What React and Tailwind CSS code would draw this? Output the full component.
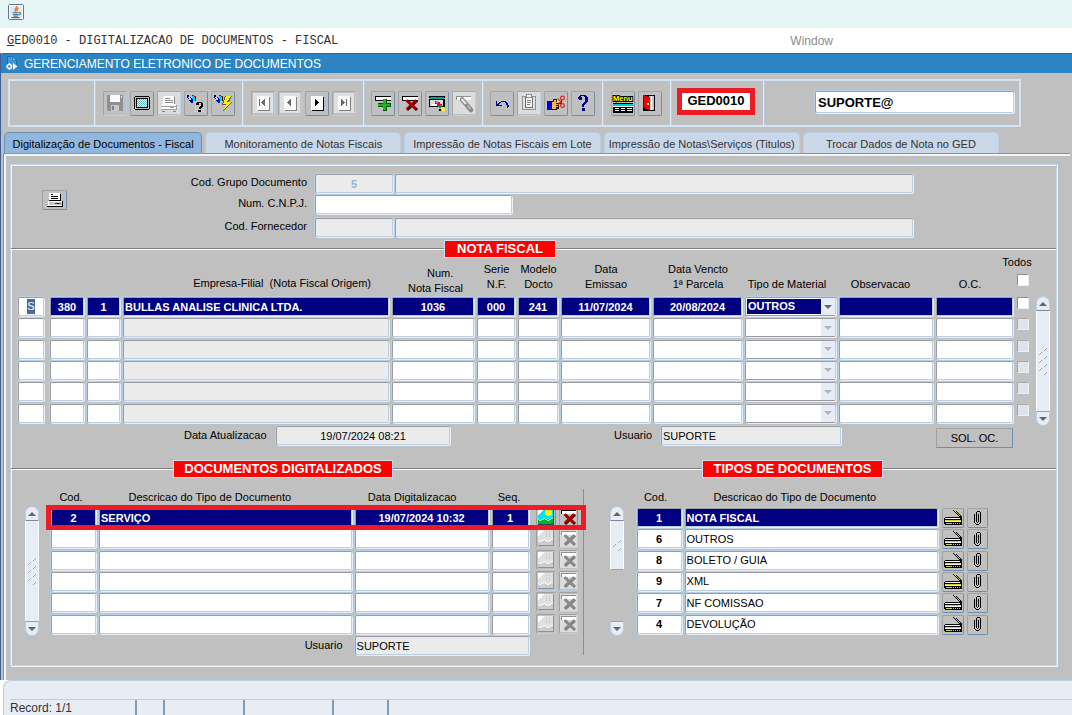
import React from 'react';

/* ---------- icons ---------- */

function Icon({ w = 20, h = 20, children }) {
  return (
    <svg width={w} height={h} viewBox={`0 0 ${w} ${h}`} shapeRendering="crispEdges" aria-hidden="true" className="block shrink-0">
      {children}
    </svg>
  );
}

const JavaIcon = () => (
  <svg width="16" height="16" viewBox="0 0 16 16" aria-hidden="true">
    <rect x="0.5" y="0.5" width="15" height="15" rx="1.5" fill="#e4e8ec" stroke="#5c7896" />
    <rect x="1.5" y="1.5" width="13" height="13" fill="none" stroke="#ffffff" />
    <path d="M8.800 2c.800 1.800-3 2.800-1.600 4.400.400.600.800.900.600 1.800M10.500 4c-1.800.800-2.400 1.800-1 3" fill="none" stroke="#e8762d" strokeWidth="1.400" />
    <path d="M4.500 8.800h6.300M5 10.600h5.200M5.600 12.200h4M3.400 13.600h8.400M11 8.800c2-.600 2.600 1.200-.400 2.400" fill="none" stroke="#44719b" strokeWidth="1.100" />
  </svg>
);

const FormIcon = () => (
  <svg width="12" height="15" viewBox="0 0 12 15" aria-hidden="true">
    <path d="M1.500 8V.500h5L10.500 4.500v4" fill="#3d9ad8" stroke="#1c6ca8" />
    <path d="M6.500.500V4.500h4z" fill="#6cbcf0" stroke="#1c6ca8" strokeWidth=".600" />
    <circle cx="3.400" cy="10.500" r="2" fill="none" stroke="#fff" strokeWidth="1.500" />
    <path d="M3.400 7v1.500M3.400 12.500v1.500M0 10.500h1.500" stroke="#fff" strokeWidth="1.400" />
    <path d="M6.800 7 11.500 10.500 6.800 14z" fill="#fff" />
  </svg>
);

const SaveIcon = () => (
  <Icon>
    <path d="M2 2h16v16H3l-1-1z" fill="#909090" />
    <path d="M5 2h10v7H5z" fill="#fafafa" />
    <path d="M16 3h1v2h-1z" fill="#dedede" />
    <path d="M6 12h8v6H6z" fill="#c8c8c8" />
    <path d="M7 13h2v4H7z" fill="#808080" />
  </Icon>
);

const ScreenIcon = () => (
  <Icon>
    <path d="M3 3h14v1h1v12h-1v1H3v-1H2V4h1z" fill="#000" />
    <path d="M3 4h14v12H3z" fill="#c0c0c0" />
    <path d="M4 5h12v10H4z" fill="#000" />
    <path d="M5 6h10v8H5z" fill="#fff" />
    <path d="M5 6.500h10M5 8.500h10M5 10.500h10M5 12.500h10" stroke="#20c8d0" strokeDasharray="1 1" />
    <path d="M6 7.500h9M6 9.500h9M6 11.500h9M6 13.500h9" stroke="#70c8d0" strokeDasharray="1 1" />
  </Icon>
);

const PrintDisabledIcon = () => (
  <Icon w={22} h={22}>
    <path d="M0 0h22v22H0z" fill="#dcdcdc" />
    <path d="M6 4h9v1h1v7H5V5h1z" fill="#fdfdfd" />
    <path d="M7 6.500h5M7 8.500h8M7 10.500h8M16.500 5v7" stroke="#888" />
    <path d="M4 12h14l1 2v3H3v-3z" fill="#fafafa" />
    <path d="M3 14.500h15M3 17.500h16M18.500 13v5M12 15.500h4" stroke="#a0a0a0" />
    <path d="M4 19.500h3M15 19.500h3" stroke="#808080" />
  </Icon>
);

const Torch = () => (
  <>
    <path d="M1 3h2v1h2v1h2v5H5V9H4V8H3V6H2V5H1z" fill="#0000a8" />
    <path d="M2 4h2v1h1v2H3V5H2z" fill="#b8d8e8" />
    <path d="M6 3h3v1h1v3H9v1H7V6H6z" fill="#00d8e8" />
    <path d="M6 2h2v1h2v1H8V3H6z" fill="#d00000" />
    <path d="M1 2h2v1H1zM9 4h1v4H9z" fill="#000" />
  </>
);

const QueryHelpIcon = () => (
  <Icon>
    <Torch />
    <path d="M9 10.500h10M9 12.500h10M9 14.500h10M9 16.500h10M9 18.500h10" stroke="#f4f060" strokeDasharray="1 1" />
    <path d="M11 9h5v1h1v4h-1v1h-1v1h-2v-2h1v-1h1v-3h-2v2h-3v-2h1zM12 17h3v2h-3z" fill="#000" />
  </Icon>
);

const QueryRunIcon = () => (
  <Icon>
    <Torch />
    <path d="M12 3h7l-3 6h3l-9 10 2-7H9z" fill="#555" />
    <path d="M13 3h5l-4 6h4l-8 9 3-7h-3z" fill="#f8f000" />
  </Icon>
);

function NavIcon({ dim, children }) {
  return (
    <Icon>
      <path d="M0 0h20v20H0z" fill={dim ? '#e0e0e0' : '#c0c0c0'} />
      <path d="M5 4h12v14H5z" fill={dim ? '#808080' : '#000'} />
      <path d="M4 3h12v14H4z" fill={dim ? '#fafafa' : '#fff'} />
      <g fill={dim ? '#6c6c6c' : '#000'}>{children}</g>
    </Icon>
  );
}
const FirstIcon = () => <NavIcon dim><path d="M6 6h1v7H6zM12 6v7h-1v-1h-1v-1H9v-1H8V9h1V8h1V7h1V6z" /></NavIcon>;
const PrevIcon = () => <NavIcon dim><path d="M11 6v7h-1v-1H9v-1H8v-1H7V9h1V8h1V7h1V6z" /></NavIcon>;
const NextIcon = () => <NavIcon><path d="M8 6v7h1v-1h1v-1h1v-1h1V9h-1V8h-1V7H9V6z" /></NavIcon>;
const LastIcon = () => <NavIcon dim><path d="M7 6v7h1v-1h1v-1h1v-1h1V9h-1V8H9V7H8V6zM12 6h1v7h-1z" /></NavIcon>;

const RecordBar = () => (
  <>
    <path d="M2 3h16v5H2z" fill="#000" />
    <path d="M3 4h15v3H3z" fill="#fff" />
  </>
);
const InsertIcon = () => (
  <Icon>
    <RecordBar />
    <path d="M10 6h4v4h4v4h-4v4h-4v-4H5v-4h5z" fill="#005000" />
    <path d="M10 6h3v5h4v2h-4v4h-3v-4H5v-2h5z" fill="#18b818" />
  </Icon>
);
const DeleteMark = ({ dark = '#400000', main = '#b00000' }) => (
  <g shapeRendering="auto" strokeWidth="3" fill="none">
    <path d="M7 7.500 17 17M17 7.500 7 17" stroke={dark} />
    <path d="M6.500 7 16 16M16 7 6.500 16" stroke={main} strokeWidth="2" />
  </g>
);
const DeleteIcon = () => (
  <Icon>
    <RecordBar />
    <DeleteMark />
  </Icon>
);
const EditFormIcon = () => (
  <Icon>
    <path d="M2 3h16v2H2zM2 6h16v8H2z" fill="#000" />
    <path d="M3 4h14v2H3z" fill="#00a0a0" />
    <path d="M3 7h13v6H3z" fill="#dcdcdc" />
    <path d="M3 13h2v-2h3V8h3v5z" fill="#fff" />
    <path d="M8 8h3v1h2v2h2v3h-3v-1h-2v-2H8z" fill="#d01030" />
    <path d="M9 8h2v2H9z" fill="#f070c0" />
    <path d="M11 12h4v3h-3z" fill="#109030" />
    <path d="M14 14h3v1h1v3h-3v-1h-1z" fill="#f8f040" />
    <path d="M16 12h1v2h-1zM12 16h2v2h-2z" fill="#000" />
  </Icon>
);
const BrushIcon = () => (
  <Icon w={22} h={22}>
    <path d="M0 0h22v22H0z" fill="#dcdcdc" />
    <g transform="translate(1 1)">
      <path d="M2 3h15v4H2z" fill="#909090" />
      <path d="M3 4h14v3H3z" fill="#fafafa" />
      <g shapeRendering="auto">
        <path d="M8 6.500 17 17" stroke="#888" strokeWidth="4.500" strokeLinecap="round" />
        <path d="M7.500 6 12 11" stroke="#e8e8e8" strokeWidth="2" />
        <path d="M13.500 12.500 16.500 16" stroke="#c4c4c4" strokeWidth="1.500" />
      </g>
    </g>
  </Icon>
);
const UndoIcon = () => (
  <Icon>
    <path d="M4 8h1v3h1v-1h1V9h2V8h5v1h1v1h1v2h1v2h-1v1h-1v-3h-1v-2h-1V9H9v1H8v1H7v1h3v1H4z" fill="#000088" />
  </Icon>
);
const ClipboardIcon = () => (
  <Icon w={22} h={22}>
    <path d="M0 0h22v22H0z" fill="#dcdcdc" />
    <path d="M4 4h14v14H4z" fill="#909090" />
    <path d="M5 5h12v12H5z" fill="#e4e4e4" />
    <path d="M7.500 5.500h7v10h-7z" fill="#fafafa" stroke="#707070" />
    <path d="M8.500 2.500h5v3h-5z" fill="#f4f4f4" stroke="#909090" />
    <path d="M9 8.500h4M9 10.500h4M9 12.500h3" stroke="#808080" />
  </Icon>
);
const HandCutIcon = () => (
  <Icon>
    <path d="M1 8h4v9H1z" fill="#0000e0" />
    <path d="M5 8h2V6h4v2h5v3h-3v5h-2v1H5z" fill="#201800" />
    <path d="M6 9h2V7h2v2h5v1h-5v1h3v1h-3v1h2v1h-2v2H6z" fill="#f0b840" />
    <path d="M11 8h3v1h-3z" fill="#fff0a0" />
    <g shapeRendering="auto" fill="none" stroke="#e02828" strokeWidth="1.200">
      <circle cx="16.500" cy="5" r="1.900" />
      <circle cx="16.500" cy="12.500" r="1.900" />
      <path d="M12 5.500 16 11M12 12 16 6.500" />
    </g>
  </Icon>
);
const HelpIcon = () => (
  <Icon>
    <path d="M7 2h6v1h1v1h1v5h-1v1h-1v1h-1v1h-1v2h-2v-3h1v-1h1V9h1V4h-1V3H8v1h1v3H6V6H5V4h1V3h1zM9 15h3v3H9z" fill="#000088" />
  </Icon>
);
const MenuIcon = () => (
  <Icon w={22} h={20}>
    <text x="1" y="8" fontFamily="Liberation Sans" fontWeight="bold" fontSize="7.500" fill="#ffff00" stroke="#000" strokeWidth="2" paintOrder="stroke">Menu</text>
    <path d="M1 10h20v3H1z" fill="#00c8d0" />
    <path d="M1 10h20v1H1zM1 13h20v7H1z" fill="#000" />
    <path d="M1 13h20v1H1zM3 15h4v1H3zM9 15h4v1H9zM15 15h5v1h-5zM3 17h4v1H3zM9 17h4v1H9zM15 17h5v1h-5z" fill="#fff" />
  </Icon>
);
const ExitIcon = () => (
  <Icon>
    <path d="M3 2h12v16H3z" fill="#000" />
    <path d="M9 3h5v14H9z" fill="#c8c8c8" />
    <path d="M11 3h1v14h-1z" fill="#fff" />
    <path d="M3 2h2v1h2v1h3v13H8v-1H5v-1H3z" fill="#f00000" />
    <path d="M3 2h1v13H3z" fill="#800000" />
    <path d="M7 10h2v2H7z" fill="#f8f8a0" />
  </Icon>
);

const PrinterIcon = () => (
  <Icon w={18} h={16}>
    <path d="M3 1h11v8H3z" fill="#fff" />
    <path d="M5 2.500h2M5 4.500h7M5 6.500h7M3 8.500h11M14.500 2v7" stroke="#000" />
    <path d="M2 9h14v4H2z" fill="#fff" />
    <path d="M3 10h13v3H3z" fill="#c8c8c8" />
    <path d="M1 14h16v1H1zM16 9h1v5h-1z" fill="#000" />
    <path d="M1 13h15v1H1z" fill="#fff" />
    <path d="M9 11h2v1H9z" fill="#e00000" />
    <path d="M11 11h2v1h-2z" fill="#0000e0" />
    <path d="M13 11h2v1h-2z" fill="#00c800" />
  </Icon>
);

const PictureIcon = ({ dim }) => (
  <Icon w={16} h={16}>
    <path d="M0 0h16v16H0z" fill={dim ? '#909090' : '#304050'} />
    <path d="M0 0h15v15H0z" fill={dim ? '#e0e0e0' : '#00e4f8'} />
    <path d="M0 0h6v1H5v1H4v1H3v1H2v1H1v1H0z" fill="#fff" />
    {dim ? (
      <path d="M8 2.500h6M8 4.500h6M8 6.500h6" stroke="#c0c0c0" strokeDasharray="1 2" />
    ) : (
      <path d="M8 1h5v1h1v4h-1v1H9V6H7V2h1z" fill="#f8f000" />
    )}
    <path d="M0 11h2v1h2v-1h2v-1h2v1h2v1h2v-1h1v-1h2v5H0z" fill={dim ? '#cccccc' : '#00b038'} />
    <path d="M0 10h1v1H0zM1 11h2v1H1zM3 10h2v1H3zM5 9h2v1H5zM7 10h2v1H7zM9 11h2v1H9zM11 10h2v1h-2zM13 9h2v1h-2z" fill={dim ? '#fafafa' : '#b8f070'} />
  </Icon>
);
const RemoveIcon = ({ dim }) => (
  <Icon w={17} h={17}>
    {dim && <path d="M0 0h17v17H0z" fill="#dcdcdc" />}
    <path d="M1 1h15v4H1z" fill={dim ? '#909090' : '#000'} />
    <path d="M2 2h14v3H2z" fill="#fff" />
    <g transform="translate(-2 -2)">
      <DeleteMark dark={dim ? '#808080' : '#400000'} main={dim ? '#8c8c8c' : '#b00000'} />
    </g>
  </Icon>
);
const ScannerIcon = () => (
  <Icon w={18} h={16}>
    <path d="M9 0h2v1H9zM10 1h3v1h-3zM11 2h3v1h-3zM12 3h3v1h-3zM13 4h3v1h-3zM14 5h3v1h-3zM15 6h3v1h-3z" fill="#000" />
    <path d="M10 0h1v1h-1zM11 1h1v1h-1zM12 2h1v1h-1zM13 3h1v1h-1zM14 4h1v1h-1zM15 5h1v1h-1z" fill="#d8d020" />
    <path d="M1 7h17v8H1v-1H0V8h1z" fill="#000" />
    <path d="M1 8h15v1H1z" fill="#fff" />
    <path d="M1 10h16v1H1z" fill="#d8d020" />
    <path d="M1 11h16v1H1z" fill="#fff" />
    <path d="M2 13h6v1H2zM9 13h1v1H9zM11 13h1v1h-1zM13 13h1v1h-1zM15 13h1v1h-1z" fill="#d8d020" />
  </Icon>
);
const ClipIcon = () => (
  <Icon w={9} h={15}>
    <path d="M4 0h3v1H4zM3 1h1v10H3zM7 1h1v11H7zM1 3h1v9H1zM5 3h1v8H5zM4 11h1v1H4zM2 12h1v1H2zM6 12h1v1H6zM3 13h3v1H3z" fill="#000" />
  </Icon>
);

/* ---------- building blocks ---------- */

const TONES = {
  white: 'bg-white text-black',
  grey: 'bg-[#ebebeb] text-black',
  greyDim: 'bg-[#ebebeb] text-[#9db4d0]',
  navy: 'bg-[#000080] text-white',
};

function Field({ tone = 'white', center = false, bold = false, label, value = '', width = 'w-full', id }) {
  return (
    <input
      type="text"
      id={id}
      aria-label={label}
      defaultValue={value}
      className={`block h-[19px] min-w-0 rounded-[2px] border border-t-[#999ca2] border-l-[#999ca2] border-r-[#b8cfe5] border-b-[#b8cfe5] px-px text-[11px] leading-[17px] shadow-[-1px_-1px_0_#b8cfe5,1px_1px_0_#e8eff7] outline-none ${width} ${TONES[tone]} ${center ? 'text-center' : ''} ${bold ? 'font-bold' : ''}`}
    />
  );
}

function ToolButton({ label, dim, children }) {
  return (
    <button
      type="button"
      aria-label={label}
      disabled={dim}
      className={`flex h-[25px] w-6 shrink-0 items-center justify-center rounded-[2px] border border-t-[#a4a4a4] border-l-[#a4a4a4] ${dim ? 'border-r-[#b8cfe5] border-b-[#b8cfe5]' : 'border-r-[#6f8fb0] border-b-[#6f8fb0]'}`}
    >
      {children}
    </button>
  );
}

function SmallButton({ label, dim, size, children }) {
  return (
    <button
      type="button"
      aria-label={label}
      disabled={dim}
      className={`flex items-center justify-center rounded-[2px] border border-t-[#a0a0a0] border-l-[#a0a0a0] ${size} ${dim ? 'border-r-[#b8cfe5] border-b-[#b8cfe5]' : 'border-r-[#6f8fb0] border-b-[#6f8fb0]'}`}
    >
      {children}
    </button>
  );
}

function Arrow({ down, dim }) {
  return (
    <svg width="8" height="4" viewBox="0 0 8 4" aria-hidden="true">
      <path d={down ? 'M0 0h8L4 4z' : 'M0 4h8L4 0z'} fill={dim ? '#b4b4b4' : '#63656f'} />
    </svg>
  );
}

function ScrollBar({ short, label }) {
  return (
    <div role="scrollbar" aria-label={label} aria-controls="form" aria-valuenow={0} className="flex h-[130px] w-3.5 shrink-0 flex-col">
      <button type="button" aria-label="Anterior" className="flex h-[15px] items-center justify-center rounded-t-[7px] border border-[#b8cfe5] border-b-[#7a8a9c] bg-[#e8edf5]">
        <Arrow />
      </button>
      <div className={`flex items-center justify-center border-x border-white bg-[#e8edf5] ${short ? 'h-[49px] border-b border-b-[#8aa4c4]' : 'flex-1'}`}>
        <svg width="8" height="28" viewBox="0 0 8 28" shapeRendering="crispEdges" aria-hidden="true">
          {(short ? [[5, 9], [0, 13], [5, 17]] : [[5, 1], [0, 5], [5, 9], [0, 13], [5, 17], [0, 21], [5, 25]]).map(([x, y]) => (
            <g key={`${x}-${y}`}>
              <path d={`M${x} ${y}h2v1h-1v1h-1z`} fill="#fff" />
              <path d={`M${x + 2} ${y}h1v1h-1v1h-1v1h-1v-1h1v-1h1z`} fill="#88a4c4" />
            </g>
          ))}
        </svg>
      </div>
      <button type="button" aria-label="Proximo" className={`flex h-[15px] items-center justify-center rounded-b-[7px] border border-[#b8cfe5] border-t-[#8aa4c4] bg-[#e8edf5] ${short ? 'mt-auto' : ''}`}>
        <Arrow down />
      </button>
    </div>
  );
}

const RuleLine = ({ grow }) => <div className={`h-[2px] border-t border-t-[#808080] bg-white ${grow}`} />;

const SectionLabel = ({ children, width }) => (
  <h2 className={`flex h-[18px] shrink-0 items-center justify-center border border-[#d4e0ee] bg-[#ff0000] text-[13px] leading-4 font-bold whitespace-nowrap text-white ${width}`}>
    {children}
  </h2>
);

function CheckBox({ disabled, label }) {
  return (
    <input
      type="checkbox"
      aria-label={label}
      disabled={disabled}
      className="block size-[12px] appearance-none border border-t-[#8e8e8e] border-l-[#8e8e8e] border-r-[#e8eff7] border-b-[#e8eff7] bg-white disabled:border-t-[#a8a8a8] disabled:border-l-[#a8a8a8] disabled:bg-[#dfe3ea]"
    />
  );
}

function MaterialSelect({ active }) {
  return (
    <div className="relative h-[19px] rounded-[2px] border border-t-[#999ca2] border-r-[#b8cfe5] border-b-[#999ca2] border-l-[#999ca2] bg-white shadow-[-1px_-1px_0_#b8cfe5,1px_1px_0_#e8eff7]">
      <select
        aria-label="Tipo de Material"
        className={`block h-[17px] w-full appearance-none border border-white pl-px text-[11px] leading-[15px] font-bold outline-none ${active ? 'bg-[#000080] text-white' : 'bg-white text-black'}`}
      >
        {active ? <option>OUTROS</option> : <option />}
      </select>
      <span className="pointer-events-none absolute inset-y-0 right-0 flex w-3.5 items-center justify-center bg-[#e8edf5]">
        <Arrow down dim={!active} />
      </span>
    </div>
  );
}

/* ---------- toolbar ---------- */

const cell = 'flex items-center gap-[3px] border-r border-[#dce8f5] shadow-[1px_0_0_#b8cfe5]';

function Toolbar() {
  return (
    <div role="toolbar" className="mt-1.5 mr-[51px] ml-[7px] flex h-12 border-2 border-[#d4e2f2]">
      <div className={`${cell} w-[85px]`} />
      <div className={`${cell} w-[148px] pl-2`}>
        <ToolButton label="Salvar" dim><SaveIcon /></ToolButton>
        <ToolButton label="Tela"><ScreenIcon /></ToolButton>
        <ToolButton label="Imprimir" dim><PrintDisabledIcon /></ToolButton>
        <ToolButton label="Entrar consulta"><QueryHelpIcon /></ToolButton>
        <ToolButton label="Executar consulta"><QueryRunIcon /></ToolButton>
      </div>
      <div className={`${cell} w-[121px] pl-2`}>
        <ToolButton label="Primeiro" dim><FirstIcon /></ToolButton>
        <ToolButton label="Anterior" dim><PrevIcon /></ToolButton>
        <ToolButton label="Proximo"><NextIcon /></ToolButton>
        <ToolButton label="Ultimo" dim><LastIcon /></ToolButton>
      </div>
      <div className={`${cell} w-[119px] pl-[7px]`}>
        <ToolButton label="Inserir"><InsertIcon /></ToolButton>
        <ToolButton label="Excluir"><DeleteIcon /></ToolButton>
        <ToolButton label="Editar"><EditFormIcon /></ToolButton>
        <ToolButton label="Limpar" dim><BrushIcon /></ToolButton>
      </div>
      <div className={`${cell} w-[120px] pl-[7px]`}>
        <ToolButton label="Desfazer"><UndoIcon /></ToolButton>
        <ToolButton label="Colar" dim><ClipboardIcon /></ToolButton>
        <ToolButton label="Recortar"><HandCutIcon /></ToolButton>
        <ToolButton label="Ajuda"><HelpIcon /></ToolButton>
      </div>
      <div className={`${cell} w-[68px] pl-2`}>
        <ToolButton label="Menu"><MenuIcon /></ToolButton>
        <ToolButton label="Sair"><ExitIcon /></ToolButton>
      </div>
      <div className={`${cell} w-[93px] pb-1 pl-[6px]`}>
        <div className="flex h-[27px] w-[78px] items-center justify-center border-[5px] border-[#ed1c24] bg-white text-[13px] leading-4 font-bold">GED0010</div>
      </div>
      <div className="flex flex-1 items-center pr-[5px] pb-[2px] pl-[51px]">
        <input
          type="text"
          aria-label="Usuario conectado"
          defaultValue="SUPORTE@"
          className="h-[22px] w-full rounded-[2px] border border-t-[#999ca2] border-l-[#999ca2] border-r-[#b8cfe5] border-b-[#b8cfe5] bg-white px-[2px] text-[13px] leading-5 font-bold shadow-[-1px_-1px_0_#b8cfe5,1px_1px_0_#e8eff7] outline-none"
        />
      </div>
    </div>
  );
}

const TABS = [
  'Digitalização de Documentos - Fiscal',
  'Monitoramento de Notas Fiscais',
  'Impressão de Notas Fiscais em Lote',
  'Impressão de Notas\\Serviços (Titulos)',
  'Trocar Dados de Nota no GED',
];

function Tabs() {
  return (
    <div role="tablist" className="mt-[5px] flex h-[21px] gap-[3px] pr-[73px] pl-px">
      {TABS.map((t, i) => (
        <button
          key={t}
          type="button"
          role="tab"
          aria-selected={i === 0}
          className={`min-w-0 rounded-t-[5px] border border-b-0 pt-px text-[11px] leading-5 whitespace-nowrap ${i === 0 ? 'flex-[198] border-[#6f8fb0] bg-[#92b7dc] text-black' : 'flex-[196] border-[#b8cfe5] bg-[#c9d7e9] text-[#333333]'}`}
        >
          {t}
        </button>
      ))}
    </div>
  );
}

/* ---------- sections ---------- */

function HeaderForm() {
  return (
    <div className="flex h-[75px] pt-[9px] pr-[143px]">
      <div className="w-[66px] pt-4 pl-[31px]">
        <SmallButton label="Imprimir" size="h-5 w-[25px]"><PrinterIcon /></SmallButton>
      </div>
      <div className="min-w-0 flex-1 text-[11px]">
        <div className="flex h-[21px] items-start gap-[8px]">
          <label htmlFor="grupo" className="w-[230px] text-right leading-4">Cod. Grupo Documento</label>
          <div className="flex flex-1 gap-[2px]">
            <Field id="grupo" tone="greyDim" center bold value="5" width="w-[78px] shrink-0" />
            <Field label="Descricao do grupo" tone="grey" />
          </div>
        </div>
        <div className="flex h-[23px] items-start gap-[8px]">
          <label htmlFor="cnpj" className="w-[230px] text-right leading-4">Num. C.N.P.J.</label>
          <Field id="cnpj" width="w-[197px]" />
        </div>
        <div className="flex h-[22px] items-start gap-[8px]">
          <label htmlFor="fornecedor" className="w-[230px] text-right leading-4">Cod. Fornecedor</label>
          <div className="flex flex-1 gap-[2px]">
            <Field id="fornecedor" tone="grey" width="w-[78px] shrink-0" />
            <Field label="Nome do fornecedor" tone="grey" />
          </div>
        </div>
      </div>
    </div>
  );
}

const INVOICE = ['380', '1', 'BULLAS ANALISE CLINICA LTDA.', '1036', '000', '241', '11/07/2024', '20/08/2024'];
const INVOICE_LABELS = ['Empresa', 'Filial', 'Nome', 'Nota Fiscal', 'Serie', 'Modelo', 'Data Emissao', 'Data Vencto'];
const td = 'py-0 pt-px pr-[2px] pl-px align-top';
const th = 'align-bottom font-normal leading-[15px] whitespace-nowrap';

function InvoiceTable() {
  return (
    <div className="flex pl-1.5">
      <table className="h-[175px] min-w-0 flex-1 table-fixed border-collapse text-[11px]">
        <colgroup>
          <col className="w-[32px]" />
          <col className="w-[37px]" />
          <col className="w-[36px]" />
          <col />
          <col className="w-[85px]" />
          <col className="w-[41px]" />
          <col className="w-[43px]" />
          <col className="w-[92px]" />
          <col className="w-[92px]" />
          <col className="w-[94px]" />
          <col className="w-[97px]" />
          <col className="w-[82px]" />
          <col className="w-[19px]" />
        </colgroup>
        <thead>
          <tr className="h-[47px]">
            <th className={`${th} pr-5 pb-[5px] text-right whitespace-pre`} colSpan={4}>Empresa-Filial  (Nota Fiscal Origem)</th>
            <th className={`${th} pl-1 whitespace-pre`}>{'   '}Num.<br />Nota Fiscal</th>
            <th className={`${th} pb-[4px]`}>Serie<br />N.F.</th>
            <th className={`${th} pb-[4px]`}>Modelo<br />Docto</th>
            <th className={`${th} pb-[4px]`}>Data<br />Emissao</th>
            <th className={`${th} pb-[4px]`}>Data Vencto<br />1ª Parcela</th>
            <th className={`${th} pr-2 pb-[4px]`}>Tipo de Material</th>
            <th className={`${th} pr-3 pb-[4px]`}>Observacao</th>
            <th className={`${th} pr-3 pb-[4px]`}>O.C.</th>
            <th className="p-0 align-top font-normal">
              <span className="-ml-4 block h-[25px] w-8 pt-1.5 leading-[15px]">Todos</span>
              <CheckBox label="Todos" />
            </th>
          </tr>
        </thead>
        <tbody>
          {[0, 1, 2, 3, 4, 5].map((r) => {
            const on = r === 0;
            return (
              <tr key={r}>
                <td className="py-0 pt-px pr-[5px] pl-px align-top">
                  {on ? (
                    <div className="flex h-[19px] items-center justify-center rounded-[2px] border border-t-[#999ca2] border-r-[#b8cfe5] border-b-[#b8cfe5] border-l-[#999ca2] bg-white shadow-[-1px_-1px_0_#b8cfe5,1px_1px_0_#e8eff7]">
                      <input type="text" aria-label="Status" defaultValue="S" className="h-[15px] w-2 bg-[#4a6894] text-center text-[11px] leading-[15px] text-white outline-none" />
                    </div>
                  ) : (
                    <Field label="Status" />
                  )}
                </td>
                {INVOICE.map((v, c) => (
                  <td key={c} className={td}>
                    <Field label={INVOICE_LABELS[c]} value={on ? v : ''} tone={on ? 'navy' : c === 2 ? 'grey' : 'white'} center={c !== 2} bold />
                  </td>
                ))}
                <td className={td}><MaterialSelect active={on} /></td>
                <td className={td}><Field label="Observacao" tone={on ? 'navy' : 'white'} /></td>
                <td className="py-0 pt-px pr-1 pl-px align-top"><Field label="O.C." tone={on ? 'navy' : 'white'} /></td>
                <td className="p-0 pt-px align-top"><CheckBox label="Selecionar" disabled={!on} /></td>
              </tr>
            );
          })}
        </tbody>
      </table>
      <div className="w-5 shrink-0 pt-[47px]"><ScrollBar label="Notas" /></div>
    </div>
  );
}

function InvoiceFooter() {
  return (
    <div className="flex h-[34px] items-start pl-[173px] text-[11px]">
      <label htmlFor="atualizacao" className="w-[82px] leading-[18px] whitespace-nowrap">Data Atualizacao</label>
      <div className="ml-[10px]"><Field id="atualizacao" tone="grey" center value="19/07/2024 08:21" width="w-[174px]" /></div>
      <label htmlFor="usuario-nota" className="ml-auto leading-[18px]">Usuario</label>
      <div className="ml-[9px]"><Field id="usuario-nota" tone="grey" value="SUPORTE" width="w-[180px]" /></div>
      <button type="button" className="mt-[2px] mr-[43px] ml-[95px] h-5 w-[77px] border border-t-[#a0a0a0] border-r-[#6f8fb0] border-b-[#6f8fb0] border-l-[#a0a0a0] leading-[18px]">SOL. OC.</button>
    </div>
  );
}

function ScannedDocs() {
  return (
    <div className="pl-3.5">
      <div className="relative flex">
        <div className="w-[25px] shrink-0 pt-[28px]"><ScrollBar label="Documentos" /></div>
        <table className="h-[157px] min-w-0 flex-1 table-fixed border-collapse text-[11px]">
          <colgroup>
            <col className="w-[48px]" />
            <col />
            <col className="w-[137px]" />
            <col className="w-[45px]" />
            <col className="w-[23px]" />
            <col className="w-[24px]" />
          </colgroup>
          <thead>
            <tr className="h-[29px]">
              <th className={`${th} pr-[6px] pb-[2px]`}>Cod.</th>
              <th className={`${th} pr-8 pb-[2px]`}>Descricao do Tipo de Documento</th>
              <th className={`${th} pr-5 pb-[2px]`}>Data Digitalizacao</th>
              <th className={`${th} pr-2 pb-[2px]`}>Seq.</th>
              <th colSpan={2} />
            </tr>
          </thead>
          <tbody>
            {[0, 1, 2, 3, 4, 5].map((r) => {
              const on = r === 0;
              const tone = on ? 'navy' : 'white';
              return (
                <tr key={r}>
                  <td className={td}><Field label="Cod." tone={tone} center bold value={on ? '2' : ''} /></td>
                  <td className={td}><Field label="Descricao" tone={tone} bold value={on ? 'SERVIÇO' : ''} /></td>
                  <td className={td}><Field label="Data Digitalizacao" tone={tone} center bold value={on ? '19/07/2024 10:32' : ''} /></td>
                  <td className="py-0 pt-px pr-[7px] pl-px align-top"><Field label="Seq." tone={tone} center bold value={on ? '1' : ''} /></td>
                  <td className="p-0 align-top"><SmallButton label="Ver imagem" dim={!on} size="h-5 w-5"><PictureIcon dim={!on} /></SmallButton></td>
                  <td className="p-0 align-top"><SmallButton label="Remover" dim={!on} size="h-5 w-[19px]"><RemoveIcon dim={!on} /></SmallButton></td>
                </tr>
              );
            })}
          </tbody>
        </table>
        <div className="pointer-events-none absolute top-[27px] right-[-3px] left-[21px] h-[25px] border-[5px] border-[#ed1c24]" />
      </div>
      <div className="flex items-start justify-end pr-[54px] text-[11px]">
        <label htmlFor="usuario-doc" className="leading-[19px]">Usuario</label>
        <div className="ml-3"><Field id="usuario-doc" tone="grey" value="SUPORTE" width="w-[174px]" /></div>
      </div>
    </div>
  );
}

const TYPES = [['1', 'NOTA FISCAL'], ['6', 'OUTROS'], ['8', 'BOLETO / GUIA'], ['9', 'XML'], ['7', 'NF COMISSAO'], ['4', 'DEVOLUÇÃO']];

function DocTypes() {
  return (
    <div className="flex pr-[68px] pl-[26px]">
      <div className="w-[26px] shrink-0 pt-[28px]"><ScrollBar short label="Tipos" /></div>
      <table className="h-[157px] min-w-0 flex-1 table-fixed border-collapse text-[11px]">
        <colgroup>
          <col className="w-[48px]" />
          <col />
          <col className="w-[25px]" />
          <col className="w-[21px]" />
        </colgroup>
        <thead>
          <tr className="h-[29px]">
            <th className={`${th} pr-2 pb-[2px]`}>Cod.</th>
            <th className={`${th} pr-9 pb-[2px]`}>Descricao do Tipo de Documento</th>
            <th colSpan={2} />
          </tr>
        </thead>
        <tbody>
          {TYPES.map(([code, name], r) => (
            <tr key={code}>
              <td className={td}><Field label="Cod." tone={r === 0 ? 'navy' : 'white'} center bold value={code} /></td>
              <td className="py-0 pt-px pr-1 pl-px align-top"><Field label="Tipo de Documento" tone={r === 0 ? 'navy' : 'white'} bold={r === 0} value={name} /></td>
              <td className="p-0 pt-px align-top"><SmallButton label="Digitalizar" size="h-5 w-[22px]"><ScannerIcon /></SmallButton></td>
              <td className="p-0 pt-px align-top"><SmallButton label="Anexar" size="h-5 w-[21px]"><ClipIcon /></SmallButton></td>
            </tr>
          ))}
        </tbody>
      </table>
    </div>
  );
}

/* ---------- page ---------- */

export default function App() {
  return (
    <div className="flex min-h-screen flex-col bg-white font-['Liberation_Sans',Arial,sans-serif] text-black">
      <div className="h-7 bg-[#e6f6f7] pt-1 pl-2"><JavaIcon /></div>

      <nav className="flex h-[25px] items-center justify-between bg-white pr-[239px] pl-[7px]">
        <a href="#form" className="font-['Liberation_Mono',monospace] text-[12px] leading-4 whitespace-nowrap text-[#333333]">
          <span className="underline">G</span>ED0010 - DIGITALIZACAO DE DOCUMENTOS - FISCAL
        </a>
        <a href="#window" className="text-[12px] leading-4 text-[#8c8c8c]">Window</a>
      </nav>

      <main id="form" className="border-l border-[#41608f] bg-[#c0c0c0]">
        <header className="flex h-5 items-center gap-[6px] rounded-tl-[3px] border-t border-[#2a6496] bg-[#2d84c4] pl-[5px]">
          <FormIcon />
          <h1 className="text-[12px] leading-4 whitespace-nowrap text-white">GERENCIAMENTO ELETRONICO DE DOCUMENTOS</h1>
        </header>

        <div className="border-l-2 border-[#b4c0d0]">
          <div className="-ml-[2px]"><Toolbar /></div>
          <Tabs />
          <div className="mr-[2px] border-t border-l border-[#7a98ba]">
            <div className="border-t-2 border-l-2 border-[#f0f4f9] pt-2 pr-[13px] pb-[14px] pl-[4px]">
              <section className="border border-[#c4d6ea] pb-[10px] shadow-[inset_1px_1px_0_#eef4fa,1px_1px_0_#eef4fa]">
                <HeaderForm />
                <div className="flex items-center">
                  <RuleLine grow="flex-[433]" />
                  <SectionLabel width="w-[112px]">NOTA FISCAL</SectionLabel>
                  <RuleLine grow="flex-[500]" />
                </div>
                <div className="-mt-[9px]"><InvoiceTable /></div>
                <InvoiceFooter />
                <div className="flex items-center">
                  <RuleLine grow="flex-[162]" />
                  <SectionLabel width="w-[220px]">DOCUMENTOS DIGITALIZADOS</SectionLabel>
                  <RuleLine grow="flex-[309]" />
                  <SectionLabel width="w-[181px]">TIPOS DE DOCUMENTOS</SectionLabel>
                  <RuleLine grow="flex-[173]" />
                </div>
                <div className="grid grid-cols-[571fr_473fr]">
                  <ScannedDocs />
                  <div className="flex">
                    <div className="mt-[11px] w-px bg-[#8e8e8e]" />
                    <div className="min-w-0 flex-1"><DocTypes /></div>
                  </div>
                </div>
              </section>
            </div>
          </div>
        </div>
      </main>

      <footer className="flex grow flex-col pl-[3px]">
        <div className="flex min-h-[34px] grow flex-col rounded-tl-[8px] border-t border-l border-[#b8cfe5] bg-[#e8edf5]">
          <div className="mt-[18px] ml-1.5 flex flex-1 border-t border-[#b8cfe5] text-[12px] leading-[14px] text-[#333333]">
            <span className="w-[127px] border-r-2 border-[#7f9cba] pt-px">Record: 1/1</span>
            <span className="w-[28px] border-r-2 border-[#7f9cba]" />
            <span className="w-[80px] border-r-2 border-[#7f9cba]" />
            <span className="w-[89px] border-r-2 border-[#7f9cba]" />
            <span className="w-[55px] border-r-2 border-[#7f9cba]" />
          </div>
        </div>
      </footer>
    </div>
  );
}
